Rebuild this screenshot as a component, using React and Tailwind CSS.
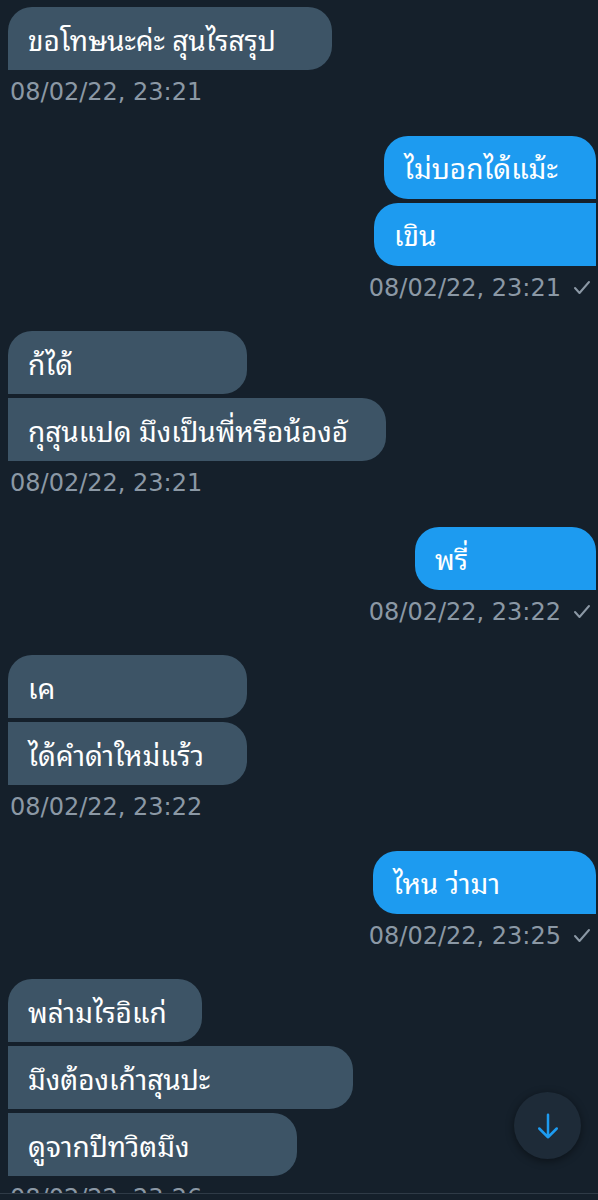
import React from 'react';

const groups = [
  { side: 'left', time: '08/02/22, 23:21', items: [{ text: 'ขอโทษนะค่ะ สุนไรสรุป', w: 'w-[324px]' }] },
  {
    side: 'right',
    time: '08/02/22, 23:21',
    items: [
      { text: 'ไม่บอกได้แม้ะ', w: 'w-[212px]' },
      { text: 'เขิน', w: 'w-[222px]' },
    ],
  },
  {
    side: 'left',
    time: '08/02/22, 23:21',
    items: [
      { text: 'ก้ได้', w: 'w-[239px]' },
      { text: 'กุสุนแปด มึงเป็นพี่หรือน้องอั', w: 'w-[378px]' },
    ],
  },
  { side: 'right', time: '08/02/22, 23:22', items: [{ text: 'พรี่', w: 'w-[181px]' }] },
  {
    side: 'left',
    time: '08/02/22, 23:22',
    items: [
      { text: 'เค', w: 'w-[239px]' },
      { text: 'ได้คำด่าใหม่แร้ว', w: 'w-[239px]' },
    ],
  },
  { side: 'right', time: '08/02/22, 23:25', items: [{ text: 'ไหน ว่ามา', w: 'w-[223px]' }] },
  {
    side: 'left',
    time: '08/02/22, 23:26',
    items: [
      { text: 'พล่ามไรอิแก่', w: 'w-[194px]' },
      { text: 'มึงต้องเก้าสุนปะ', w: 'w-[345px]' },
      { text: 'ดูจากปีทวิตมึง', w: 'w-[289px]' },
    ],
  },
];

const Bubble = ({ text, w, side, first }) => {
  const corners =
    side === 'left'
      ? `rounded-r-[24px] ${first ? 'rounded-tl-[24px]' : ''}`
      : `rounded-l-[24px] ${first ? 'rounded-tr-[24px]' : ''}`;
  return (
    <div
      className={`${w} h-[63px] flex items-center px-5 text-[28px] text-white whitespace-nowrap ${corners} ${
        side === 'left' ? 'bg-[#3d5466]' : 'bg-[#1d9bf0]'
      }`}
    >
      {text}
    </div>
  );
};

const Group = ({ side, time, items }) => (
  <div className={`flex flex-col mb-[29.5px] ${side === 'left' ? 'items-start pl-2' : 'items-end pr-[2px]'}`}>
    <div className={`flex flex-col gap-1 ${side === 'left' ? 'items-start' : 'items-end'}`}>
      {items.map((it, i) => (
        <Bubble key={i} {...it} side={side} first={i === 0} />
      ))}
    </div>
    <div
      className={`mt-2 h-[28px] flex items-center gap-[12px] text-[24px] leading-[28px] text-[#8b98a5] ${
        side === 'left' ? 'pl-[2px]' : 'pr-[5px]'
      }`}
      style={{ fontFamily: '"DejaVu Sans", sans-serif' }}
    >
      <span>{time}</span>
      {side === 'right' && (
        <svg width="18" height="15" viewBox="0 0 18 15" fill="none">
          <path d="M2 8l4.5 5L16 2" stroke="#8b98a5" strokeWidth="2" strokeLinecap="round" strokeLinejoin="round" />
        </svg>
      )}
    </div>
  </div>
);

export default function App() {
  return (
    <div
      className="relative w-[598px] h-[1200px] overflow-hidden bg-[#15202b]"
      style={{ fontFamily: '"Noto Sans Thai Looped", "Loma", "Garuda", "Sarabun", "Noto Sans Thai", "Noto Sans", sans-serif' }}
    >
      <div className="pt-[7px]">
        {groups.map((g, i) => (
          <Group key={i} {...g} />
        ))}
      </div>
      <div className="absolute left-0 right-0 top-[1193px] bottom-0 bg-[#15202b] border-t border-[#2f3b47]" />
      <button className="absolute left-[514px] top-[1092px] w-[67px] h-[67px] rounded-full bg-[#1e2b38] shadow-[0_2px_8px_rgba(0,0,0,0.45)] flex items-center justify-center">
        <svg width="30" height="30" viewBox="0 0 24 24" fill="none" stroke="#1d9bf0" strokeWidth="2" strokeLinecap="round" strokeLinejoin="round">
          <path d="M12 3v18M5 14l7 7 7-7" />
        </svg>
      </button>
    </div>
  );
}
